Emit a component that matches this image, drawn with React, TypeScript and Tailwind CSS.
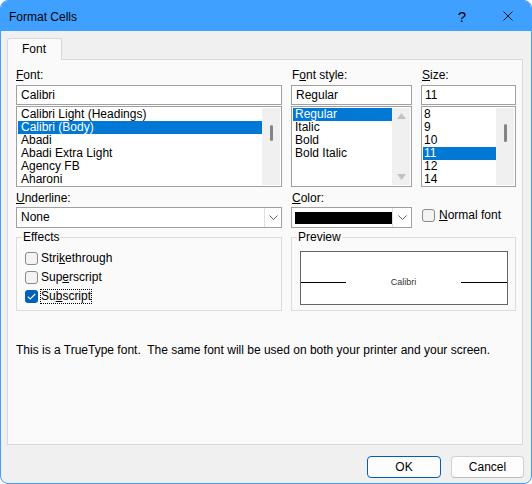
import React from 'react';

const fontList = ['Calibri Light (Headings)', 'Calibri (Body)', 'Abadi', 'Abadi Extra Light', 'Agency FB', 'Aharoni'];
const styleList = ['Regular', 'Italic', 'Bold', 'Bold Italic'];
const sizeList = ['8', '9', '10', '11', '12', '14'];

const Chevron = () => (
  <svg width="9" height="6" viewBox="0 0 9 6" fill="none">
    <path d="M0.5 0.5L4.5 4.5L8.5 0.5" stroke="#606060" strokeWidth="1" />
  </svg>
);

const Check = ({ checked }: { checked?: boolean }) =>
  checked ? (
    <div className="flex h-[13px] w-[13px] shrink-0 items-center justify-center rounded-[3px] bg-[#005fb8]">
      <svg width="9" height="7" viewBox="0 0 9 7" fill="none">
        <path d="M0.8 3.6L3.2 6L8.2 1" stroke="white" strokeWidth="1.1" />
      </svg>
    </div>
  ) : (
    <div className="h-[13px] w-[13px] shrink-0 rounded-[3px] border border-[#8a8a8a] bg-[#f3f3f3]" />
  );

const ListBox = ({
  items,
  selected,
  thumbTop,
  thumbH,
  arrows,
  textPad,
}: {
  items: string[];
  selected: number;
  thumbTop?: string;
  thumbH?: string;
  arrows?: boolean;
  textPad: string;
}) => (
  <div className="mt-px flex h-[81px] border border-[#a0a0a0] bg-white">
    <div className="flex-1 overflow-hidden pl-px pt-px">
      {items.map((it, i) => (
        <div
          key={it}
          className={`h-[13px] whitespace-nowrap leading-[13px] ${textPad} ${
            i === selected ? 'bg-[#0078d4] text-white' : ''
          }`}
        >
          {it}
        </div>
      ))}
    </div>
    <div className="my-px mr-px w-[18px] bg-[#f0f0f0]">
      {arrows ? (
        <div className="flex h-full flex-col items-center justify-between py-[5px]">
          <svg width="9" height="6" viewBox="0 0 9 6">
            <path d="M4.5 0L9 6H0Z" fill="#c2c2c2" />
          </svg>
          <svg width="9" height="6" viewBox="0 0 9 6">
            <path d="M0 0H9L4.5 6Z" fill="#c2c2c2" />
          </svg>
        </div>
      ) : (
        <div className={`flex justify-center ${thumbTop}`}>
          <div className={`w-[3px] rounded-full bg-[#858585] ${thumbH}`} />
        </div>
      )}
    </div>
  </div>
);

const Label = ({ pre, acc, post, pad = '' }: { pre?: string; acc: string; post: string; pad?: string }) => (
  <div className={`h-4 leading-4 ${pad}`}>
    {pre}
    <span className="underline underline-offset-[1px]">{acc}</span>
    {post}
  </div>
);

const TextBox = ({ value, pad }: { value: string; pad: string }) => (
  <div className={`mt-[2px] h-[20px] border border-[#a0a0a0] bg-white leading-[18px] ${pad}`}>{value}</div>
);

export default function App() {
  return (
    <div className="h-[484px] w-[532px] bg-white font-['Liberation_Sans',Arial,sans-serif] text-[12px] text-black">
      <div className="flex h-full w-full flex-col overflow-hidden rounded-[8px] border border-[#40a0ff] bg-[#f0f0f0]">
        {/* title bar */}
        <div className="flex h-[30px] shrink-0 items-center bg-[#40a0ff] pl-[8px] pr-[18px]">
          <span className="pt-[1px]">Format Cells</span>
          <span className="ml-auto text-[15px] leading-none">?</span>
          <svg className="ml-[37px]" width="10" height="10" viewBox="0 0 10 10">
            <path d="M0.5 0.5L9.5 9.5M9.5 0.5L0.5 9.5" stroke="#111" strokeWidth="1" />
          </svg>
        </div>

        {/* tab */}
        <div className="ml-[6px] mt-[7px] flex">
          <div className="relative z-10 -mb-px h-[22px] w-[55px] rounded-t-[3px] border border-b-0 border-[#d9d9d9] bg-[#fafafa] pl-[14px] leading-[20px]">
            Font
          </div>
        </div>

        {/* panel */}
        <div className="ml-[6px] h-[386px] w-[516px] border border-[#d9d9d9] bg-[#fafafa] pl-[8px] pr-[5px] pt-[7px]">
          <div className="grid grid-cols-[266px_121px_95px] gap-x-[9px]">
            <div>
              <Label acc="F" post="ont:" />
              <TextBox value="Calibri" pad="pl-[4px]" />
              <ListBox items={fontList} selected={1} thumbTop="pt-[17px]" thumbH="h-[16px]" textPad="pl-[3px]" />
            </div>
            <div>
              <Label pre="F" acc="o" post="nt style:" pad="pl-px" />
              <TextBox value="Regular" pad="pl-[4px]" />
              <ListBox items={styleList} selected={0} arrows textPad="pl-[2px]" />
            </div>
            <div>
              <Label acc="S" post="ize:" pad="pl-px" />
              <TextBox value="11" pad="pl-[3px]" />
              <ListBox items={sizeList} selected={3} thumbTop="pt-[16px]" thumbH="h-[18px]" textPad="pl-[1px]" />
            </div>
          </div>

          {/* underline / color */}
          <div className="mt-[3px] grid grid-cols-[266px_121px_95px] gap-x-[9px]">
            <div>
              <Label acc="U" post="nderline:" />
              <div className="mt-px flex h-[21px] border border-[#a0a0a0] bg-white">
                <div className="flex-1 pl-[4px] leading-[19px]">None</div>
                <div className="flex w-[17px] items-center justify-center border-l border-[#e0e0e0]">
                  <Chevron />
                </div>
              </div>
            </div>
            <div>
              <Label acc="C" post="olor:" pad="pl-px" />
              <div className="mt-px flex h-[21px] border border-[#a0a0a0] bg-white">
                <div className="flex flex-1 items-center pl-[3px]">
                  <div className="h-[12px] w-full bg-black" />
                </div>
                <div className="flex w-[19px] items-center justify-center border-l border-[#e0e0e0]">
                  <Chevron />
                </div>
              </div>
            </div>
            <div className="flex items-end">
              <div className="mb-[4px] ml-px flex items-center gap-[4px]">
                <Check />
                <span>
                  <span className="underline underline-offset-[1px]">N</span>ormal font
                </span>
              </div>
            </div>
          </div>

          {/* effects / preview */}
          <div className="mt-[9px] grid grid-cols-[266px_225px] gap-x-[9px]">
            <div className="relative h-[74px] border border-[#dcdcdc] pl-[8px] pt-[11px]">
              <span className="absolute -top-[9px] left-[5px] bg-[#fafafa] px-px leading-4">Effects</span>
              {[
                { pre: 'Stri', acc: 'k', post: 'ethrough', on: false },
                { pre: 'Sup', acc: 'e', post: 'rscript', on: false },
                { pre: 'Su', acc: 'b', post: 'script', on: true },
              ].map((r) => (
                <div key={r.post} className="flex h-[19px] items-center">
                  <Check checked={r.on} />
                  <span
                    className={`ml-[2px] border leading-[13px] ${
                      r.on ? 'border-dotted border-black' : 'border-transparent'
                    }`}
                  >
                    {r.pre}
                    <span className="underline underline-offset-[1px]">{r.acc}</span>
                    {r.post}
                  </span>
                </div>
              ))}
            </div>
            <div className="relative h-[74px] border border-[#dcdcdc] pl-[8px] pr-[7px] pt-[13px]">
              <span className="absolute -top-[9px] left-[5px] bg-[#fafafa] px-px leading-4">Preview</span>
              <div className="flex h-[54px] items-center border border-[#646464] bg-white pt-[9px]">
                <div className="h-px w-[45px] bg-black" />
                <div className="flex-1 text-center text-[9px] text-[#333]">Calibri</div>
                <div className="h-px w-[46px] bg-black" />
              </div>
            </div>
          </div>

          <div className="mt-[31px] whitespace-pre leading-4">
            This is a TrueType font.  The same font will be used on both your printer and your screen.
          </div>
        </div>

        {/* buttons */}
        <div className="mr-[7px] mt-[11px] flex justify-end gap-[10px]">
          <button className="h-[22px] w-[74px] rounded-[4px] border border-[#005fb8] bg-[#fdfdfd] leading-[20px]">OK</button>
          <button className="h-[22px] w-[73px] rounded-[4px] border border-[#d0d0d0] border-b-[#bdbdbd] bg-[#fdfdfd] leading-[20px]">
            Cancel
          </button>
        </div>
      </div>
    </div>
  );
}
